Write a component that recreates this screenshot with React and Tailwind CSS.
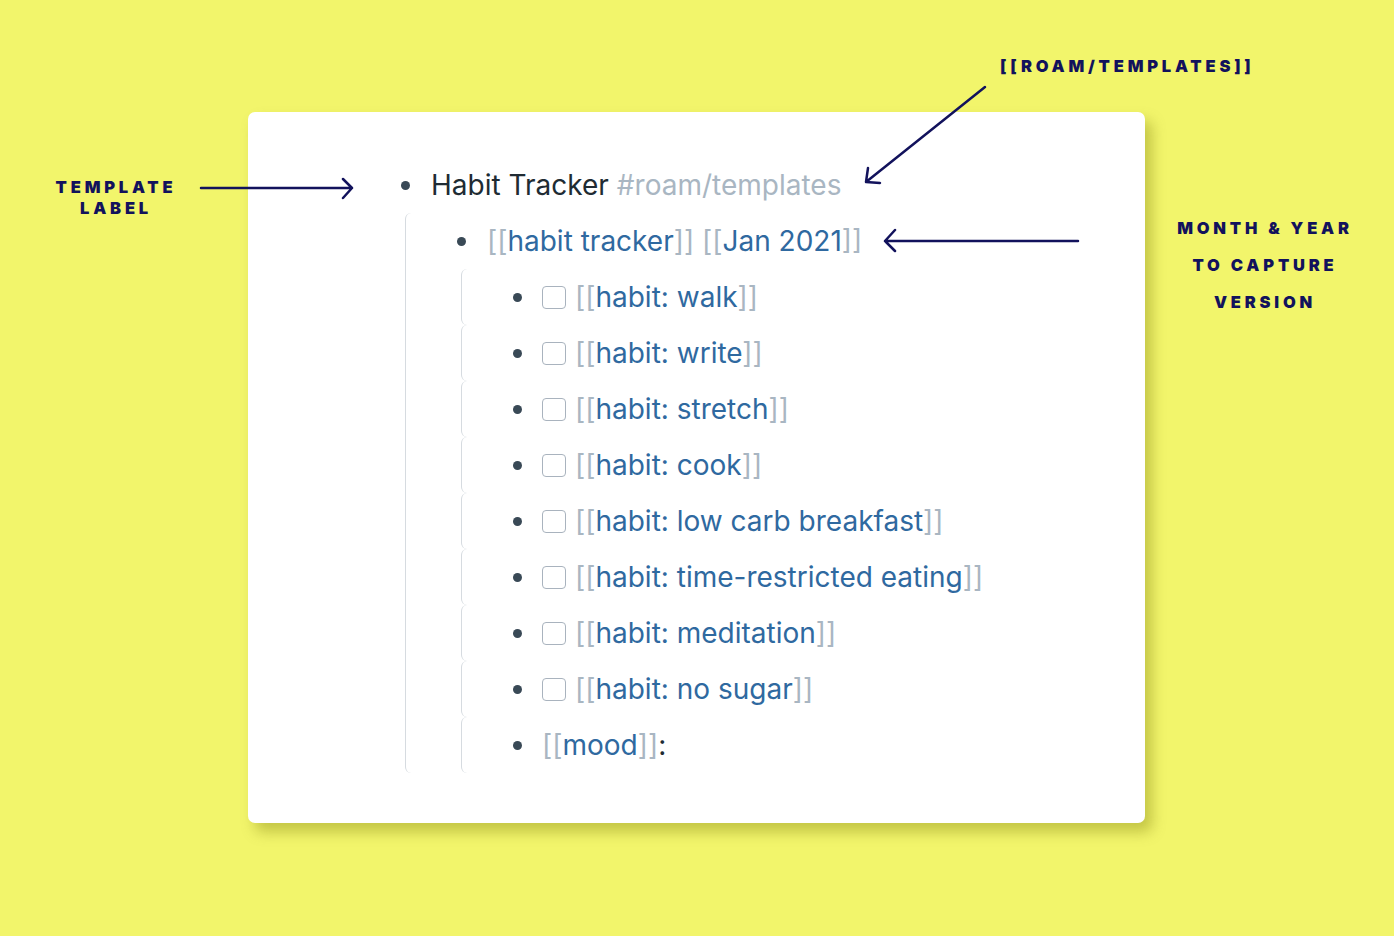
import React from 'react'

const habits = [
  'walk',
  'write',
  'stretch',
  'cook',
  'low carb breakfast',
  'time-restricted eating',
  'meditation',
  'no sugar',
]

const font = { fontFamily: 'Inter, "Noto Sans", sans-serif' }

function Bullet() {
  return (
    <div className="flex w-[26px] shrink-0 items-center justify-center">
      <span className="h-[9px] w-[9px] rounded-full bg-[#394956]" />
    </div>
  )
}

function Ref({ children }) {
  return (
    <span>
      <span className="text-[#a9b6c2]">[[</span>
      <span className="text-[#2f69a0]">{children}</span>
      <span className="text-[#a9b6c2]">]]</span>
    </span>
  )
}

function Arrows() {
  return (
    <svg className="pointer-events-none absolute left-0 top-0" width="1394" height="936" fill="none" stroke="#12125c" strokeWidth="2.5" strokeLinecap="round" strokeLinejoin="round">
      <path d="M201 188 L352 188 M343 179 L352 188 L343 198" />
      <path d="M985 87 L866 182 M868 168 L866 182 L880 183" />
      <path d="M1078 241 L885 241 M895 230 L885 241 L895 251" />
    </svg>
  )
}

export default function App() {
  return (
    <div className="relative h-[936px] w-[1394px] overflow-hidden bg-[#f2f56b]" style={font}>
      <div className="ml-[248px] mt-[112px] h-[711px] w-[897px] rounded-[7px] bg-white pt-[45px] shadow-[7px_9px_14px_rgba(110,110,0,0.35)]">
        <div className="flex h-[56px] items-center pl-[144px] text-[28px]">
          <Bullet />
          <span className="ml-[13px] text-[#202b33]">Habit Tracker</span>
          <span className="ml-[8px] text-[#a9b6c2]">#roam/templates</span>
        </div>
        <div className="ml-[157px] rounded-l-[6px] border-l border-[#d6dbe0]">
          <div className="flex h-[56px] items-center pl-[42px] text-[28px]">
            <Bullet />
            <span className="ml-[13px]"><Ref>habit tracker</Ref> <Ref>Jan 2021</Ref></span>
          </div>
          <div className="ml-[55px]">
            {habits.map((h) => (
              <div key={h} className="flex h-[56px] items-center rounded-l-[6px] border-l border-[#d6dbe0] pl-[42px] text-[28px]">
                <Bullet />
                <span className="ml-[12px] h-[23px] w-[24px] shrink-0 rounded-[4px] border-[1.5px] border-[#a9b3be] bg-white" />
                <span className="ml-[9px]"><Ref>habit: {h}</Ref></span>
              </div>
            ))}
            <div className="flex h-[56px] items-center rounded-l-[6px] border-l border-[#d6dbe0] pl-[42px] text-[28px]">
              <Bullet />
              <span className="ml-[12px]"><Ref>mood</Ref><span className="text-[#202b33]">:</span></span>
            </div>
          </div>
        </div>
      </div>

      <div className="absolute left-[36px] top-[177px] w-[160px] text-center text-[16.5px] font-black leading-[21px] tracking-[0.23em] text-[#12125c]">
        TEMPLATE<br />LABEL
      </div>
      <div className="absolute left-[1000px] top-[56px] text-[16.5px] font-black leading-[21px] tracking-[0.23em] text-[#12125c]">
        [[ROAM/TEMPLATES]]
      </div>
      <div className="absolute left-[1163px] top-[210px] w-[204px] text-center text-[16.5px] font-black leading-[37px] tracking-[0.23em] text-[#12125c]">
        MONTH &amp; YEAR<br />TO CAPTURE<br />VERSION
      </div>
      <Arrows />
    </div>
  )
}
